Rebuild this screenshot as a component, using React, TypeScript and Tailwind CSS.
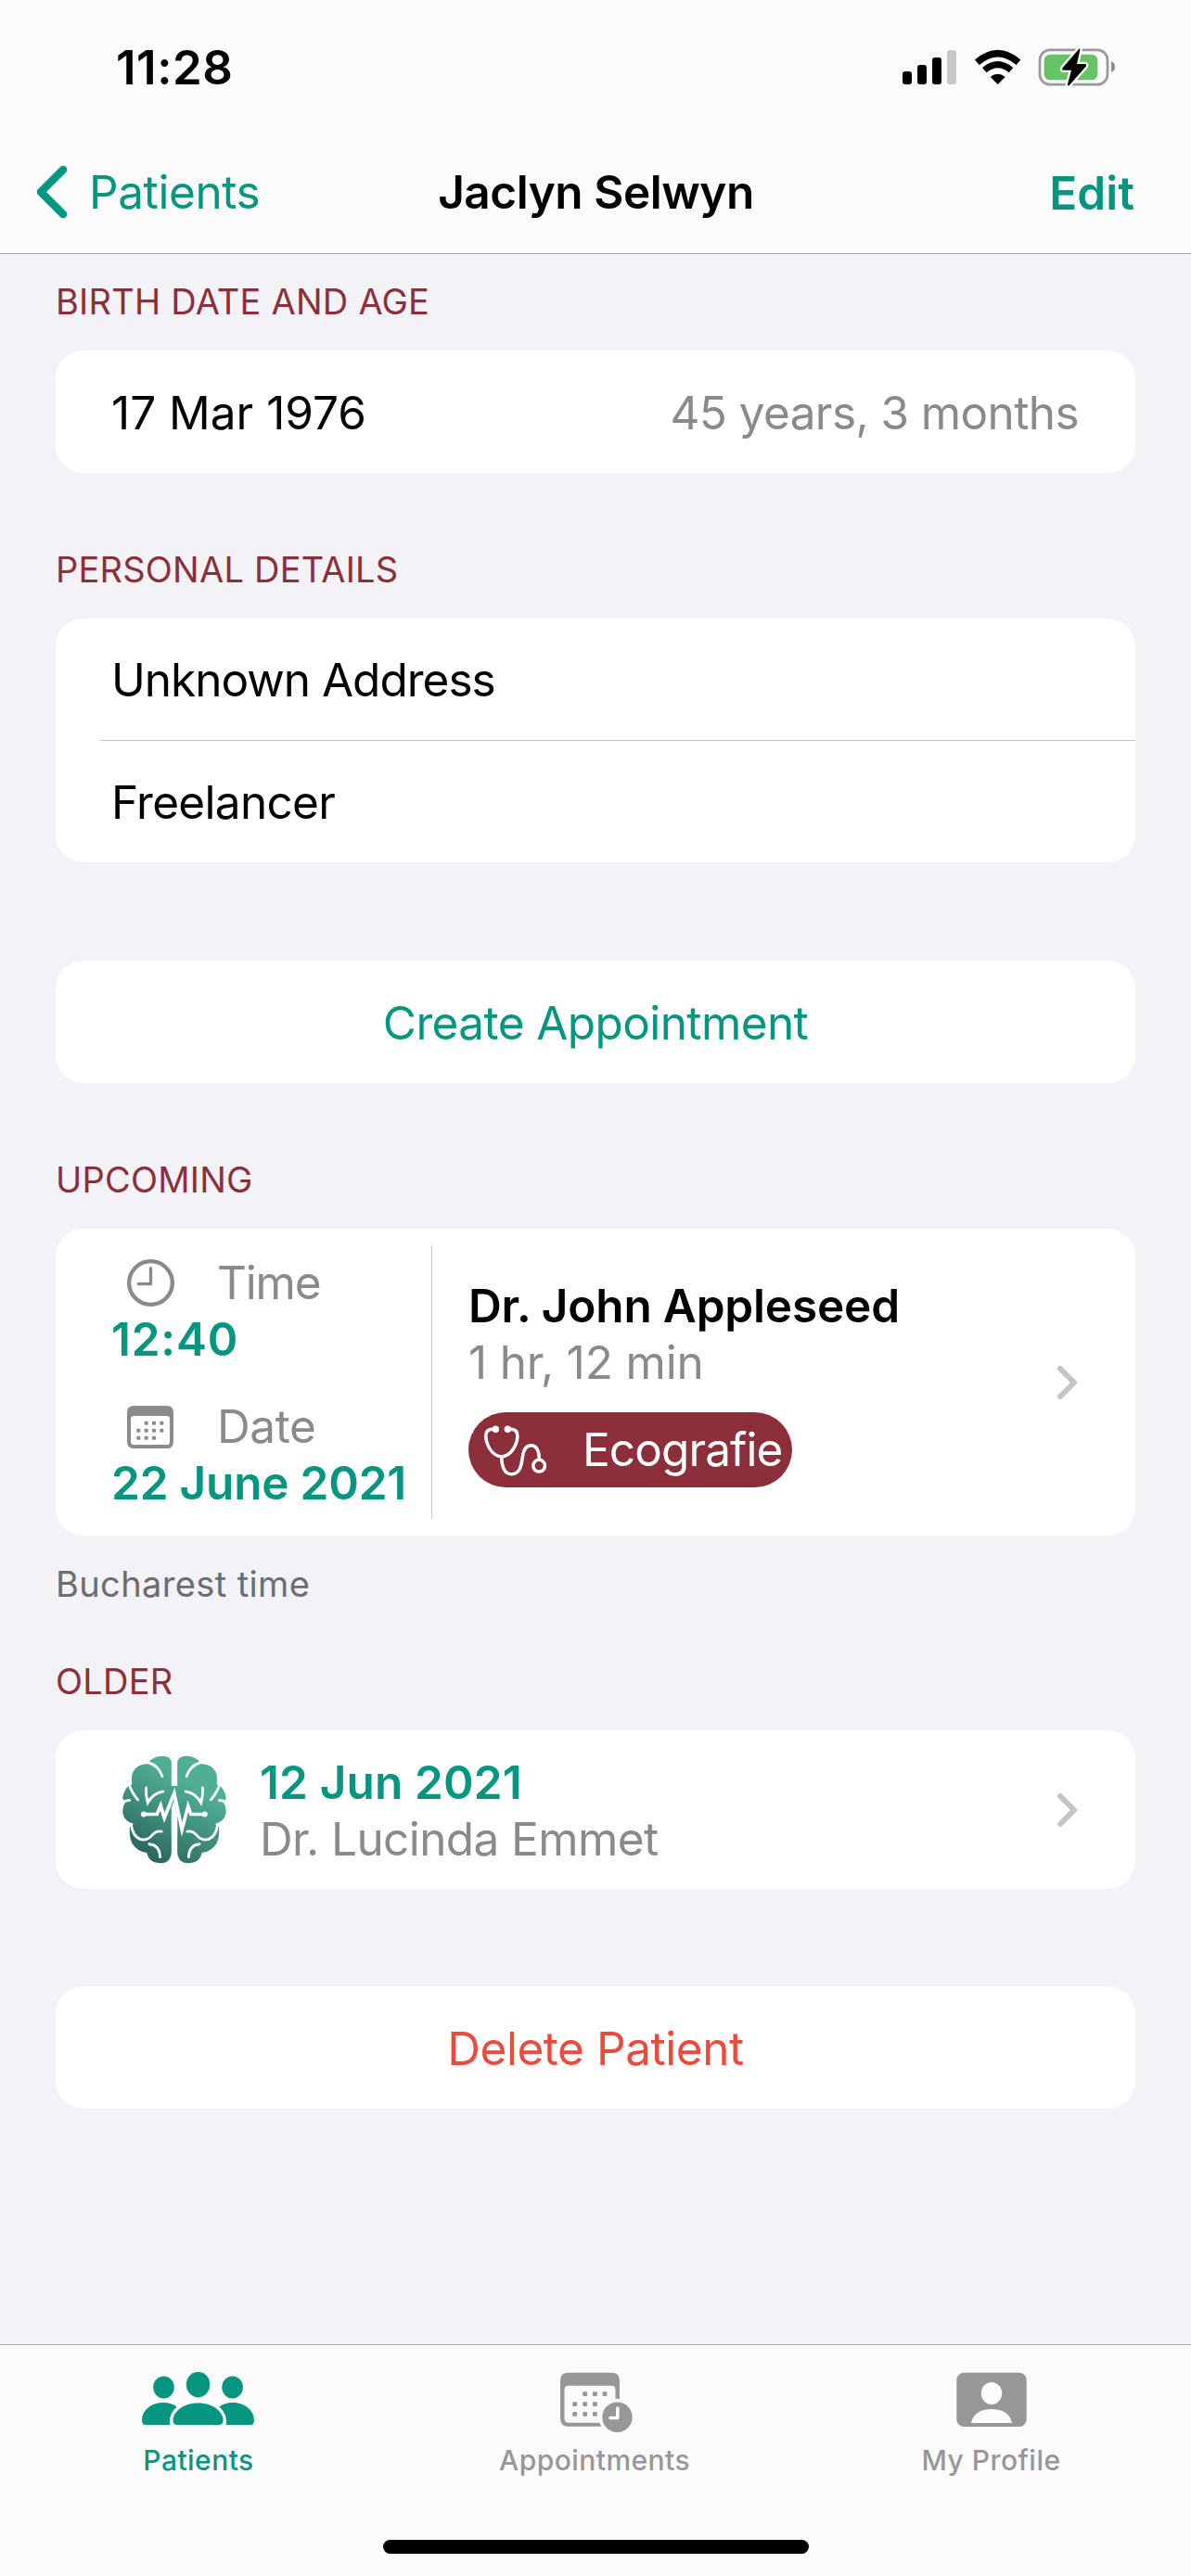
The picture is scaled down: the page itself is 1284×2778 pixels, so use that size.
import type { ReactNode } from 'react';

function StatusIcons() {
  return (
    <svg width="260" height="55" viewBox="0 0 780 165" fill="none">
      <rect x="39" y="96" width="30" height="42" rx="9" fill="#000" />
      <rect x="87" y="75" width="30" height="63" rx="9" fill="#000" />
      <rect x="135" y="51" width="30" height="87" rx="9" fill="#000" />
      <rect x="183" y="27" width="30" height="111" rx="9" fill="#c8c8ca" />
      <path d="M280 67 Q347 9 414 67" stroke="#000" strokeWidth="22" />
      <path d="M304 92 Q347 56 390 92" stroke="#000" strokeWidth="21" />
      <path d="M323 114 Q347 94 371 114 L347 138 Z" fill="#000" />
      <rect x="483" y="26.500" width="219" height="112" rx="33" stroke="#9a9a9b" strokeWidth="8" />
      <path d="M714 64 Q726 68 726 82 Q726 95 714 99 Z" fill="#8e8e90" />
      <rect x="497" y="41" width="173" height="83" rx="20" fill="#66c466" />
      <path
        d="M609 24 L557 84 Q552 91 560 92 H585 L573 137 Q572 145 579 140 L632 80 Q636 73 629 72 H603 L613 27 Q614 20 609 24 Z"
        fill="#000"
        stroke="#fcfcfd"
        strokeWidth="14"
        paintOrder="stroke"
      />
    </svg>
  );
}

function Chevron() {
  return (
    <svg width="24" height="38" viewBox="0 0 24 38" fill="none">
      <path d="M4 4 L19 19 L4 34" stroke="#c4c4c7" strokeWidth="6" strokeLinecap="round" strokeLinejoin="round" />
    </svg>
  );
}

function ClockIcon() {
  return (
    <svg width="51" height="51" viewBox="0 0 153 153" fill="none" stroke="#8a8a8c">
      <circle cx="76.500" cy="76.500" r="70" strokeWidth="13" />
      <path d="M76.500 29 V80 H37" strokeWidth="10" strokeLinecap="round" strokeLinejoin="round" />
    </svg>
  );
}

function CalendarIcon() {
  const dots = [
    [62, 56], [87, 56], [112, 56],
    [37, 80], [62, 80], [87, 80], [112, 80],
    [37, 104], [62, 104], [87, 104],
  ];
  return (
    <svg width="50" height="46" viewBox="0 0 150 138" fill="#8a8a8c">
      <path
        fillRule="evenodd"
        d="M22 0 H128 Q150 0 150 22 V116 Q150 138 128 138 H22 Q0 138 0 116 V22 Q0 0 22 0 Z M22 33 Q12 33 12 43 V116 Q12 126 22 126 H128 Q138 126 138 116 V43 Q138 33 128 33 Z"
      />
      {dots.map(([x, y]) => (
        <rect key={`${x}-${y}`} x={x - 6} y={y - 6} width="12" height="12" rx="3" />
      ))}
    </svg>
  );
}

function Stethoscope() {
  return (
    <svg width="70" height="56" viewBox="47 50 210 168" fill="none" stroke="#fff" strokeWidth="10.500" strokeLinecap="round">
      <path d="M84 66 C58 62 51 78 58 106 C65 131 82 152 106 155 C130 152 147 131 155 106 C162 78 155 62 129 66" />
      <path d="M106 155 C107 192 117 211 138 211 C164 211 170 188 174 156 C177 130 187 118 202 118 C220 118 227 136 228 160" />
      <circle cx="227.500" cy="184" r="19" />
      <circle cx="87" cy="66" r="6" fill="#fff" />
      <circle cx="126" cy="66" r="6" fill="#fff" />
    </svg>
  );
}

const lobe =
  'M210 58 Q205 39 182 39 Q155 39 138 56 L134 65 Q92 66 82 100 Q80 115 82 132 L72 135 Q52 155 52 178 L60 188 Q51 205 52 225 Q58 252 88 260 L75 268 Q72 300 82 322 Q100 350 130 353 Q138 387 175 387 Q208 387 210 350 Z';

function HalfGrooves() {
  return (
    <>
      <path d="M136 61 Q168 70 180 105" />
      <path d="M72 130 Q82 160 101 181" />
      <path d="M50 194 Q58 182 74 183" />
      <path d="M128 142 Q126 166 133 191 Q150 160 183 154" />
      <path d="M79 262 Q85 300 108 309 Q132 316 148 295 Q161 281 178 284" />
      <path d="M138 325 Q172 328 173 367" />
    </>
  );
}

function BrainLogo() {
  return (
    <svg width="112" height="117" viewBox="51 38 337 350" fill="none">
      <defs>
        <linearGradient id="brain" gradientUnits="userSpaceOnUse" x1="120" y1="380" x2="270" y2="130">
          <stop offset="0" stopColor="#2a605a" />
          <stop offset="0.500" stopColor="#3c8b78" />
          <stop offset="1" stopColor="#50ae95" />
        </linearGradient>
      </defs>
      <path d={lobe} fill="url(#brain)" />
      <path
        d="M229 58 Q234 39 257 39 Q284 39 301 56 L305 65 Q347 66 357 100 Q359 115 357 132 L367 135 Q387 155 387 178 L379 188 Q388 205 387 225 Q381 252 351 260 L364 268 Q367 300 357 322 Q339 350 309 353 Q301 387 264 387 Q231 387 229 350 Z"
        fill="url(#brain)"
      />
      <path d="M200 200 L217 148 H222 L240 225" stroke="url(#brain)" strokeWidth="24" />
      <path d="M219.500 205 L229 245 V300 H210 V240 Z" fill="#fff" />
      <g stroke="#fff" strokeWidth="8.500" strokeLinecap="round">
        <HalfGrooves />
        <g transform="translate(439 0) scale(-1 1)">
          <HalfGrooves />
        </g>
      </g>
      <path
        d="M120 228 H163 L175 200 L187 240 L219 160 L244 278 L264 202 L273 228 H318"
        stroke="#fff"
        strokeWidth="11"
        strokeMiterlimit="10"
      />
      <circle cx="120" cy="228" r="9" fill="#fff" />
      <circle cx="318" cy="228" r="9" fill="#fff" />
    </svg>
  );
}

function PeopleIcon() {
  return (
    <svg className="-ml-[1px]" width="123" height="66" viewBox="0 0 123 66" fill="#059681">
      <ellipse cx="24.500" cy="16.500" rx="11.300" ry="12.100" />
      <ellipse cx="61.600" cy="13.600" rx="12.700" ry="13.800" />
      <ellipse cx="98.600" cy="16.500" rx="11.300" ry="12.100" />
      <path d="M34.500 52 C34.500 44 44 33.500 61.600 33.500 S88.600 44 88.600 52 Q88.600 57 84 57 H39 Q34.500 57 34.500 52 Z" />
      <path d="M1 52 C1 43 9 33 24.500 33 Q33 33 38.600 37.500 C33 43 30 49 31.200 57 H5 Q1 57 1 52 Z" />
      <path d="M122 52 C122 43 114 33 98.600 33 Q90 33 84.400 37.500 C90 43 93 49 91.800 57 H118 Q122 57 122 52 Z" />
    </svg>
  );
}

function CalendarClockIcon() {
  const dots = [
    [26.700, 23.700], [37.400, 23.700], [48, 23.700],
    [15.700, 34.700], [26.700, 34.700], [37.400, 34.700],
    [15.700, 45.300], [26.700, 45.300], [37.400, 45.300],
  ];
  return (
    <svg className="ml-[3px]" width="79" height="66" viewBox="0 0 79 66" fill="#979799">
      <path
        fillRule="evenodd"
        d="M9 0.700 H55 Q64 0.700 64 9 V50 Q64 58.700 55 58.700 H9 Q0 58.700 0 50 V9 Q0 0.700 9 0.700 Z M9 14.700 Q4.500 14.700 4.500 19 V50 Q4.500 54.700 9 54.700 H55 Q59.500 54.700 59.500 50 V19 Q59.500 14.700 55 14.700 Z"
      />
      {dots.map(([x, y]) => (
        <rect key={`${x}-${y}`} x={x - 2.400} y={y - 2.400} width="4.800" height="4.800" rx="1" />
      ))}
      <circle cx="61.500" cy="48.700" r="20" fill="#fbfbfc" />
      <circle cx="61.500" cy="48.700" r="16.200" />
      <path d="M61.800 39 V49.500 H54" fill="none" stroke="#fbfbfc" strokeWidth="3.600" strokeLinecap="round" strokeLinejoin="round" />
    </svg>
  );
}

function ProfileIcon() {
  return (
    <svg className="-ml-[3px]" width="76" height="66" viewBox="0 0 76 66">
      <rect x="0.300" y="0.700" width="75.400" height="58.300" rx="8" fill="#979799" />
      <ellipse cx="38" cy="23" rx="11.200" ry="12" fill="#fbfbfc" />
      <path d="M16 55 C18 45 26 40 38 40 S58 45 60 55 Z" fill="#fbfbfc" />
    </svg>
  );
}

function SectionTitle({ children, className }: { children: ReactNode; className: string }) {
  return (
    <h2 className={`h-[78px] pl-[60px] text-[38px] leading-[50px] tracking-[0.22px] text-[#8c2f3b] ${className}`}>
      {children}
    </h2>
  );
}

function Card({ children, className }: { children: ReactNode; className: string }) {
  return <section className={`mx-[60px] flex rounded-[30px] bg-white ${className}`}>{children}</section>;
}

export default function App() {
  return (
    <div className="flex h-[2778px] w-[1284px] flex-col overflow-hidden bg-[#f2f2f7] font-['Inter',sans-serif] text-[49.5px] leading-[61px] tracking-[-0.6px] whitespace-nowrap text-black">
      <header className="h-[274px] border-b border-[#a7a7ab] bg-[#fbfbfc]">
        <div className="flex h-[141px] items-center justify-between pt-[4px] pr-[64px] pl-[125px]">
          <span className="text-[51px] font-semibold tracking-[0.5px]">11:28</span>
          <StatusIcons />
        </div>
        <nav className="grid h-[132px] grid-cols-[1fr_auto_1fr] items-center px-[61px] text-[#059681]">
          <button className="-ml-[23px] flex items-center gap-[23px]">
            <svg width="35" height="58" viewBox="0 0 35 58" fill="none">
              <path d="M30 5 L6 29 L30 53" stroke="#059681" strokeWidth="8.500" strokeLinecap="round" strokeLinejoin="round" />
            </svg>
            <span className="tracking-[-0.4px]">Patients</span>
          </button>
          <h1 className="pl-[1px] font-semibold tracking-[-0.45px] text-black">Jaclyn Selwyn</h1>
          <button className="justify-self-end pt-[2px] font-semibold tracking-[0.1px]">Edit</button>
        </nav>
      </header>

      <main className="flex flex-1 flex-col">
        <SectionTitle className="mt-[26px]">BIRTH DATE AND AGE</SectionTitle>
        <Card className="h-[132px] items-center justify-between pt-[2px] pr-[61px] pl-[60px]">
          <span className="tracking-[0px]">17 Mar 1976</span>
          <span className="text-[#8a8a8c]">45 years, 3 months</span>
        </Card>

        <SectionTitle className="mt-[79px]">PERSONAL DETAILS</SectionTitle>
        <Card className="h-[263px] flex-col pl-[48px]">
          <div className="flex h-[132px] items-center border-b border-[#c6c6c8] pt-[2px] pl-[12px] tracking-[-1px]">
            Unknown Address
          </div>
          <div className="flex h-[131px] items-center pt-[2px] pl-[12px] tracking-[-0.7px]">Freelancer</div>
        </Card>

        <Card className="mt-[106px] h-[132px] items-center justify-center pt-[2px] text-[#059681]">
          Create Appointment
        </Card>

        <SectionTitle className="mt-[79px]">UPCOMING</SectionTitle>
        <Card className="h-[331px] pl-[60px]">
          <div className="my-[18px] w-[346px] border-r border-[#c6c6c8] pt-[10px]">
            <div className="flex items-center pl-[17px] text-[#8a8a8c]">
              <ClockIcon />
              <span className="ml-[46px] tracking-[-1.2px]">Time</span>
            </div>
            <div className="mb-[33px] font-semibold tracking-[0.8px] text-[#059681]">12:40</div>
            <div className="flex items-center pl-[17px] text-[#8a8a8c]">
              <CalendarIcon />
              <span className="ml-[47px] tracking-[-0.4px]">Date</span>
            </div>
            <div className="font-semibold tracking-[-0.2px] text-[#059681]">22 June 2021</div>
          </div>
          <div className="flex-1 pt-[53px] pl-[39px]">
            <div className="font-semibold tracking-[-0.18px]">Dr. John Appleseed</div>
            <div className="tracking-[-0.2px] text-[#8a8a8c]">1 hr, 12 min</div>
            <div className="mt-[23px] flex h-[81px] w-[349px] items-center rounded-full bg-[#8c2f3b] pl-[16px] text-white">
              <Stethoscope />
              <span className="ml-[37px] tracking-[-0.9px]">Ecografie</span>
            </div>
          </div>
          <div className="flex items-center pr-[61px]">
            <Chevron />
          </div>
        </Card>
        <p className="mt-[27px] pl-[60px] text-[38px] leading-[50px] tracking-[0.38px] text-[#6c6c71]">Bucharest time</p>

        <SectionTitle className="mt-[55px]">OLDER</SectionTitle>
        <Card className="h-[171px] items-center pr-[61px] pl-[72px]">
          <BrainLogo />
          <div className="ml-[36px] flex-1 pt-[2px]">
            <div className="font-semibold tracking-[0.15px] text-[#059681]">12 Jun 2021</div>
            <div className="text-[#8a8a8c]">Dr. Lucinda Emmet</div>
          </div>
          <Chevron />
        </Card>

        <Card className="mt-[105px] h-[132px] items-center justify-center pt-[2px] tracking-[-0.45px] text-[#eb4b3d]">
          Delete Patient
        </Card>
      </main>

      <footer className="flex h-[250px] flex-col items-center border-t border-[#a7a7ab] bg-[#fbfbfc]">
        <div className="grid w-full grid-cols-3 pt-[29px] text-[30px] leading-[36px] font-medium tracking-[0.45px] text-[#979799]">
          <button className="flex flex-col items-center gap-[11px] text-[#059681]">
            <PeopleIcon />
            <span>Patients</span>
          </button>
          <button className="flex flex-col items-center gap-[11px]">
            <CalendarClockIcon />
            <span className="-ml-[2px]">Appointments</span>
          </button>
          <button className="flex flex-col items-center gap-[11px]">
            <ProfileIcon />
            <span className="-ml-[3px]">My Profile</span>
          </button>
        </div>
        <div className="mt-[68px] h-[15px] w-[459px] rounded-full bg-black" />
      </footer>
    </div>
  );
}
